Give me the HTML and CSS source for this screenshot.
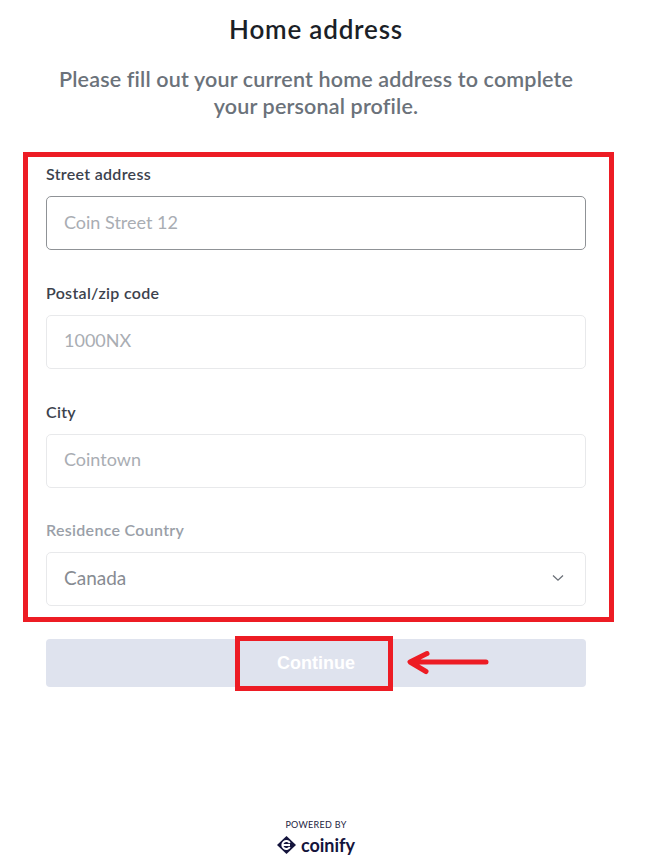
FILE: index.html
```html
<!DOCTYPE html>
<html lang="en">
<head>
<meta charset="utf-8">
<title>Home address</title>
<link rel="stylesheet" href="styles.css">
</head>
<body>
<main class="page">
  <h1 class="title">Home address</h1>
  <p class="subtitle">Please fill out your current home address to complete your personal profile.</p>
  <form class="form">
    <div class="field">
      <label class="label" for="street">Street address</label>
      <input class="input input-focus" id="street" placeholder="Coin Street 12">
    </div>
    <div class="field">
      <label class="label" for="zip">Postal/zip code</label>
      <input class="input" id="zip" placeholder="1000NX">
    </div>
    <div class="field">
      <label class="label" for="city">City</label>
      <input class="input" id="city" placeholder="Cointown">
    </div>
    <div class="field">
      <span class="label label-muted">Residence Country</span>
      <div class="input select">
        <span>Canada</span>
        <svg class="chevron" width="12" height="8" viewBox="0 0 12 8"><path d="M1 1.5 6 6.2 11 1.5" fill="none" stroke="#6b7078" stroke-width="1.3"/></svg>
      </div>
    </div>
    <button class="continue" type="button">Continue</button>
  </form>
  <footer class="footer">
    <div class="powered">POWERED BY</div>
    <div class="brand">
      <svg class="logo" width="19" height="18" viewBox="0 0 19 18"><path d="M9.5 0 19 9 9.5 18 0 9Z" fill="#14143c"/><path d="M12.8 7A4 4 0 1 0 12.8 11M6.3 9H13" fill="none" stroke="#fff" stroke-width="2"/></svg>
      <span class="brand-name">coinify</span>
    </div>
  </footer>
</main>
<div class="mark mark-form"></div>
<div class="mark mark-button"></div>
<svg class="mark-arrow" width="84" height="26" viewBox="0 0 84 26"><path d="M80 12H6M21 3.5 4 12 20 21.5" fill="none" stroke="#ed1c24" stroke-width="5" stroke-linecap="round" stroke-linejoin="round"/></svg>
</body>
</html>
```
FILE: styles.css
```css
* { box-sizing: border-box; }
html, body { margin: 0; background: #fff; }
body { position: relative; width: 658px; height: 867px; overflow: hidden; font-family: "Lato", "Open Sans", sans-serif; }
.page { display: flex; flex-direction: column; width: 540px; height: 867px; margin-left: 46px; }
.title { margin: 14px 0 0; height: 31px; font-size: 26px; line-height: 31px; font-weight: 600; color: #1b1f27; text-align: center; letter-spacing: 0.8px; }
.subtitle { margin: 21px auto 0; width: 530px; font-size: 21.5px; line-height: 27px; font-weight: 600; color: #6b727a; text-align: center; letter-spacing: 0.16px; }
.form { display: flex; flex-direction: column; margin-top: 44px; }
.field { display: flex; flex-direction: column; height: 118.8px; }
.label { height: 32px; font-size: 16px; line-height: 20px; font-weight: 600; color: #3c424d; letter-spacing: 0.3px; }
.label-muted { color: #9a9fa8; }
.input { width: 540px; height: 54px; flex: none; border: 1px solid #e8e9eb; border-radius: 5px; padding: 0 17px 3px; font-family: inherit; font-size: 18px; color: #9a9ea5; background: #fff; outline: none; }
.input::placeholder { color: #a9adb3; opacity: 1; }
.input-focus { border-color: #8f9296; }
.select { display: flex; align-items: center; justify-content: space-between; padding-right: 21px; color: #878b92; }
.select span { font-size: 19px; }
.continue { width: 540px; height: 48px; border: 0; border-radius: 4px; padding: 1px 0 0; background: #dfe3ee; color: #fff; font-family: "Liberation Sans", sans-serif; font-size: 18px; font-weight: 700; }
.footer { margin-top: auto; padding-bottom: 10px; display: flex; flex-direction: column; align-items: center; }
.powered { font-size: 9px; line-height: 12px; color: #24243f; letter-spacing: 0.3px; }
.brand { display: flex; align-items: center; gap: 5px; height: 24px; margin-top: 2px; }
.brand-name { font-size: 18px; line-height: 24px; font-weight: 700; color: #14143c; }
.mark { position: absolute; border: 5px solid #ed1c24; }
.mark-form { left: 23px; top: 152px; width: 591px; height: 470px; }
.mark-button { left: 235px; top: 636px; width: 158px; height: 55px; }
.mark-arrow { position: absolute; left: 406px; top: 650px; }
```
